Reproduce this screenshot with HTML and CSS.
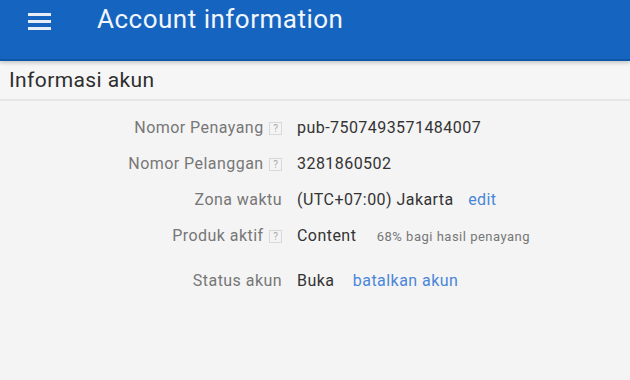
FILE: index.html
```html
<!DOCTYPE html>
<html lang="id">
<head>
    <meta charset="UTF-8">
    <meta name="viewport" content="width=device-width, initial-scale=1.0">
    <title>Account information</title>
    <link rel="stylesheet" href="styles.css">
</head>
<body>
    <header class="appbar">
        <span class="menu-icon">
            <span></span>
            <span></span>
            <span></span>
        </span>
        <h1>Account information</h1>
    </header>

    <div class="section-title">Informasi akun</div>

    <div class="info-table">
        <div class="row">
            <div class="label">Nomor Penayang <span class="help">?</span></div>
            <div class="value">pub-7507493571484007</div>
        </div>
        <div class="row">
            <div class="label">Nomor Pelanggan <span class="help">?</span></div>
            <div class="value">3281860502</div>
        </div>
        <div class="row">
            <div class="label">Zona waktu</div>
            <div class="value">(UTC+07:00) Jakarta <a class="link edit" href="#">edit</a></div>
        </div>
        <div class="row">
            <div class="label">Produk aktif <span class="help">?</span></div>
            <div class="value">Content <span class="note">68% bagi hasil penayang</span></div>
        </div>
        <div class="row status">
            <div class="label">Status akun</div>
            <div class="value">Buka <a class="link" href="#">batalkan akun</a></div>
        </div>
    </div>
</body>
</html>
```

FILE: styles.css
```css
* {
    margin: 0;
    padding: 0;
    box-sizing: border-box;
}

body {
    font-family: Roboto, "Noto Sans", sans-serif;
    background-color: #f4f4f4;
    color: #333;
    width: 630px;
    height: 380px;
    overflow: hidden;
}

.appbar {
    height: 61px;
    background-color: #1565c0;
    border-bottom: 2px solid #0d57a8;
    box-shadow: 0 2px 4px rgba(0,0,0,0.2);
    display: flex;
    align-items: flex-start;
    padding: 4px 0 0 28px;
    position: relative;
    z-index: 1;
}

.menu-icon {
    display: flex;
    flex-direction: column;
    gap: 4px;
    width: 23px;
    margin-top: 9px;
}

.menu-icon span {
    display: block;
    height: 3px;
    background-color: #e8eef8;
}

.appbar h1 {
    color: #f2f6fc;
    font-size: 26px;
    font-weight: 400;
    letter-spacing: 0.5px;
    margin-left: 46px;
    line-height: 30px;
}

.section-title {
    height: 40px;
    background-color: #f6f6f6;
    border-bottom: 2px solid #e6e6e6;
    font-size: 21px;
    letter-spacing: 0.4px;
    color: #2e2e2e;
    padding: 7px 0 0 9px;
}

.info-table {
    padding-top: 8px;
}

.row {
    display: grid;
    grid-template-columns: 282px 1fr;
    column-gap: 15px;
    height: 36px;
    align-items: center;
    font-size: 16px;
    letter-spacing: 0.45px;
}

.row.status {
    margin-top: 9px;
}

.label {
    text-align: right;
    color: #777;
}

.value {
    color: #333;
}

.help {
    display: inline-block;
    width: 13px;
    height: 13px;
    border: 1px solid #d8d8d8;
    color: #aaa;
    font-size: 10px;
    letter-spacing: 0;
    line-height: 11px;
    text-align: center;
    vertical-align: 1px;
    margin-left: 1px;
}

.link {
    color: #4a86d8;
    text-decoration: none;
    margin-left: 14px;
}

.link.edit {
    margin-left: 10px;
}

.note {
    font-size: 13px;
    letter-spacing: 0.5px;
    color: #777;
    margin-left: 16px;
}
```
